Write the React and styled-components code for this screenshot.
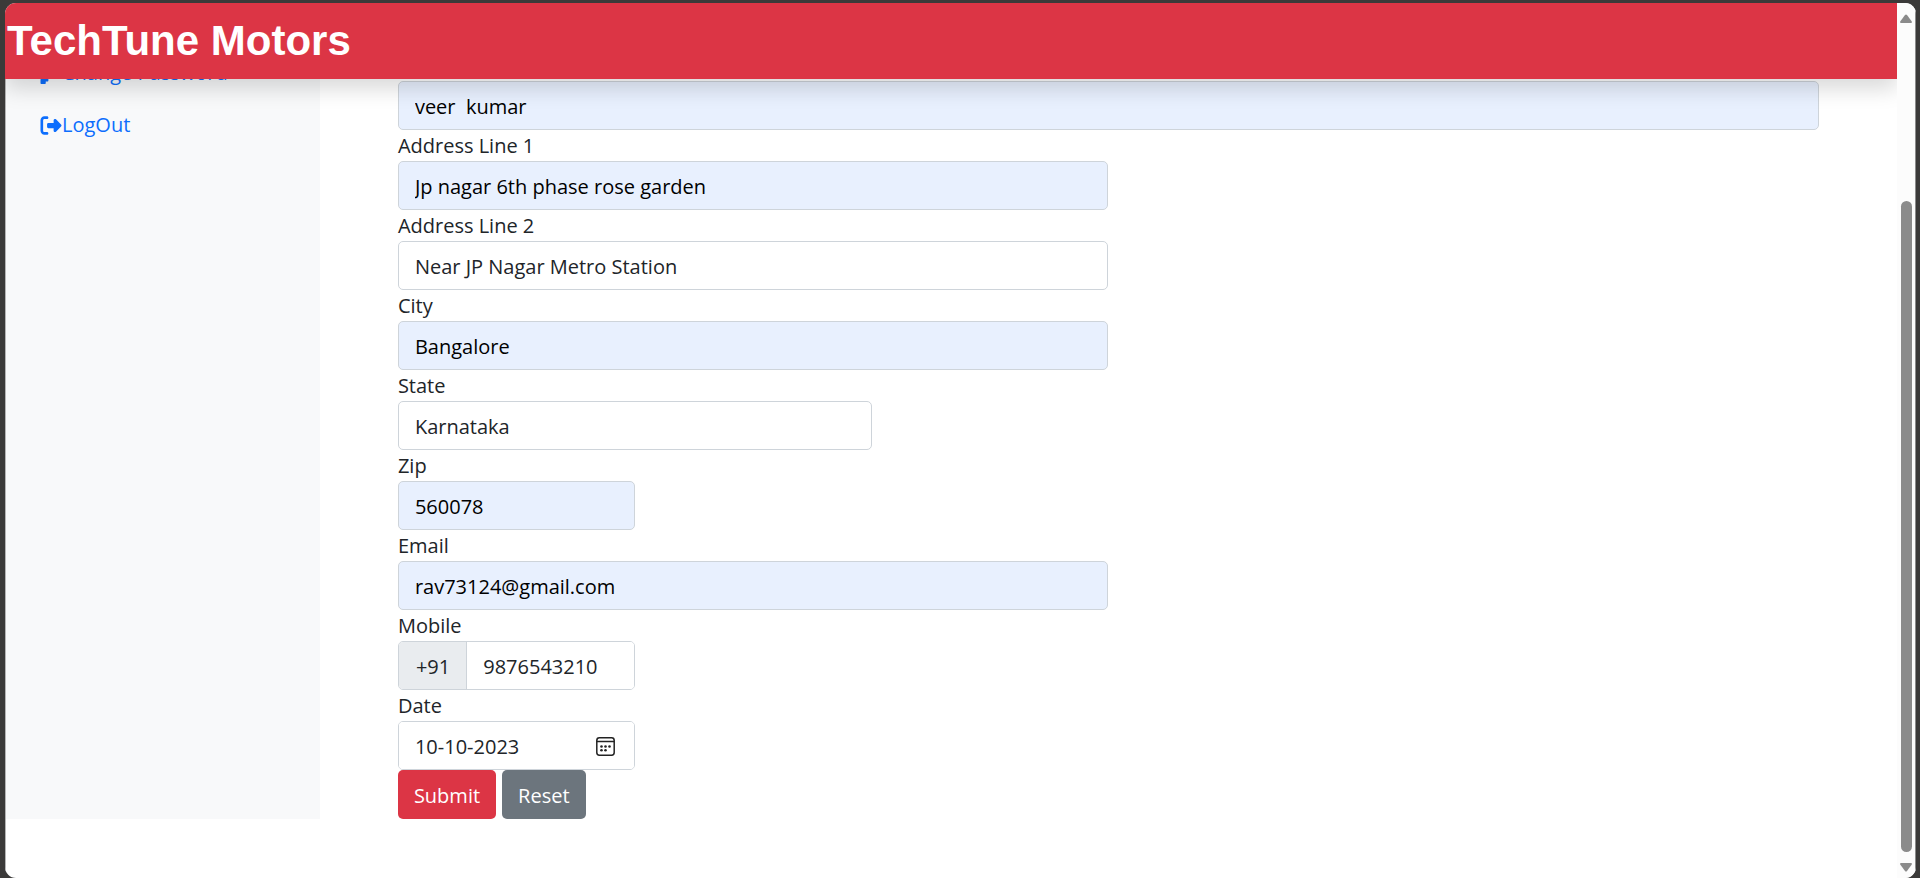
import React from "react";
import styled, { createGlobalStyle } from "styled-components";
import { FaKey, FaRightFromBracket } from "react-icons/fa6";

const GlobalStyle = createGlobalStyle`
  *, *::before, *::after { box-sizing: border-box; }
  body {
    margin: 0;
    background: #3b3a39;
    color: #212529;
    font-family: "Open Sans", "Noto Sans", sans-serif;
    font-size: 20px;
    line-height: 30px;
  }
  input, button { font: inherit; color: inherit; margin: 0; }
`;

const Desktop = styled.div`
  padding: 3px 4px 0 5px;
`;

const BrowserWindow = styled.div`
  display: flex;
  min-height: calc(100vh - 3px);
  border-radius: 11px;
  overflow: hidden;
  background: #fff;
`;

const Page = styled.div`
  flex: 1;
  min-width: 0;
  display: flex;
  flex-direction: column;
  overflow: hidden;
`;

const Header = styled.header`
  position: relative;
  z-index: 1;
  padding: 8px 0 8px 2px;
  background: #dc3545;
  box-shadow: 0 10px 20px rgba(0, 0, 0, 0.15);
`;

const Brand = styled.h1`
  margin: 0;
  color: #fff;
  font-family: "Liberation Sans", Arial, sans-serif;
  font-size: 42px;
  font-weight: 700;
  line-height: 60px;
`;

const Content = styled.div`
  flex: 1;
  border-left: 1px solid #b5b5b5;
`;

const Columns = styled.div`
  display: flex;
`;

const Sidebar = styled.nav`
  width: 16.6%;
  display: flex;
  flex-direction: column;
  gap: 20px;
  padding-left: 34px;
  background: #f8f9fa;
`;

const SideLink = styled.a`
  display: flex;
  align-items: center;
  color: #0d6efd;
  text-decoration: none;
  line-height: 32px;

  &:first-child { margin-top: -22px; }
  svg { width: 22px; height: 21px; }
`;

const Main = styled.main`
  flex: 1;
  padding: 2px 78px 0;
`;

const Field = styled.div`
  width: ${(p) => p.$width};
`;

const Label = styled.label`
  display: block;
  padding-top: 1px;
`;

const Input = styled.input`
  display: block;
  width: 100%;
  height: 49px;
  padding: 2px 16px 0;
  border: 1px solid #ced4da;
  border-radius: 5px;
  outline: none;
  background: ${(p) => (p.$filled ? "#e8f0fe" : "#fff")};
  color: ${(p) => (p.$filled ? "#000" : "#212529")};
`;

const InputGroup = styled.div`
  display: flex;
  height: 49px;
  border: 1px solid #ced4da;
  border-radius: 5px;
  overflow: hidden;
`;

const Prefix = styled.span`
  display: flex;
  align-items: center;
  padding: 2px 16px 0 17px;
  border-right: 1px solid #ced4da;
  background: #e9ecef;
`;

const BareInput = styled.input`
  flex: 1;
  min-width: 0;
  padding: 2px 16px 0;
  border: 0;
  outline: none;
  background: #fff;
`;

const PickerButton = styled.button`
  display: flex;
  align-items: center;
  padding: 2px 19px 0 0;
  border: 0;
  background: #fff;
`;

const Actions = styled.div`
  display: flex;
  gap: 6px;
`;

const Button = styled.button`
  height: 49px;
  padding: 2px 16px 0;
  border: 0;
  border-radius: 5px;
  background: ${(p) => (p.$danger ? "#dc3545" : "#6c757d")};
  color: #fff;
`;

const ScrollBar = styled.div`
  width: 19px;
  display: flex;
  flex-direction: column;
  align-items: center;
  padding: 11px 0 6px;
  border-right: 1px solid #8b8b8b;
  background: #fcfcfc;
`;

const ScrollTrack = styled.div`
  flex: 1;
  display: flex;
  flex-direction: column;
  padding: 0 0 11px;
`;

const ScrollGap = styled.div`
  flex: 178;
`;

const ScrollThumb = styled.div`
  flex: 651;
  width: 11px;
  border-radius: 6px;
  background: #8b8b8b;
`;

const CalendarIcon = () => (
  <svg width="19" height="19" viewBox="0 0 19 19" fill="none" stroke="#222" strokeWidth="1.5" aria-hidden="true">
    <rect x="0.8" y="0.8" width="17.4" height="17.4" rx="2.6" />
    <path d="M0.8 4.6H18.2" />
    <g fill="#222" stroke="none">
      <circle cx="5.5" cy="9.5" r="1.3" />
      <circle cx="9.5" cy="9.5" r="1.3" />
      <circle cx="13.5" cy="9.5" r="1.3" />
      <circle cx="5.5" cy="13.3" r="1.3" />
      <circle cx="9.5" cy="13.3" r="1.3" />
    </g>
  </svg>
);

const Arrow = ({ down }) => (
  <svg width="12" height="9" viewBox="0 0 12 9" fill="#8b8b8b" aria-hidden="true">
    <path d={down ? "M1 0H11Q12.5 .4 11.6 1.7L7 8Q6 9 5 8L.4 1.7Q-.5 .4 1 0Z" : "M1 9H11Q12.5 8.6 11.6 7.3L7 1Q6 0 5 1L.4 7.3Q-.5 8.6 1 9Z"} />
  </svg>
);

const ADDRESS_FIELDS = [
  { id: "address1", label: "Address Line 1", value: "Jp nagar 6th phase rose garden", width: "50%", filled: true },
  { id: "address2", label: "Address Line 2", value: "Near JP Nagar Metro Station", width: "50%" },
  { id: "city", label: "City", value: "Bangalore", width: "50%", filled: true },
  { id: "state", label: "State", value: "Karnataka", width: "33.3333%" },
  { id: "zip", label: "Zip", value: "560078", width: "16.6667%", filled: true },
  { id: "email", label: "Email", value: "rav73124@gmail.com", width: "50%", filled: true, type: "email" },
];

export default function App() {
  return (
    <Desktop>
      <GlobalStyle />
      <BrowserWindow>
        <Page>
          <Header>
            <Brand>TechTune Motors</Brand>
          </Header>
          <Content>
            <Columns>
              <Sidebar>
                <SideLink href="#password"><FaKey />Change Password</SideLink>
                <SideLink href="#logout"><FaRightFromBracket />LogOut</SideLink>
              </Sidebar>
              <Main>
                <form onSubmit={(e) => e.preventDefault()}>
                  <Field $width="100%">
                    <Input id="name" aria-label="Name" defaultValue="veer  kumar" $filled />
                  </Field>
                  {ADDRESS_FIELDS.map((f) => (
                    <Field key={f.id} $width={f.width}>
                      <Label htmlFor={f.id}>{f.label}</Label>
                      <Input id={f.id} type={f.type || "text"} defaultValue={f.value} $filled={f.filled} />
                    </Field>
                  ))}
                  <Field $width="16.6667%">
                    <Label htmlFor="mobile">Mobile</Label>
                    <InputGroup>
                      <Prefix>+91</Prefix>
                      <BareInput id="mobile" type="tel" defaultValue="9876543210" />
                    </InputGroup>
                  </Field>
                  <Field $width="16.6667%">
                    <Label htmlFor="date">Date</Label>
                    <InputGroup>
                      <BareInput id="date" defaultValue="10-10-2023" />
                      <PickerButton type="button" aria-label="Choose date"><CalendarIcon /></PickerButton>
                    </InputGroup>
                  </Field>
                  <Actions>
                    <Button type="submit" $danger>Submit</Button>
                    <Button type="reset">Reset</Button>
                  </Actions>
                </form>
              </Main>
            </Columns>
          </Content>
        </Page>
        <ScrollBar>
          <Arrow />
          <ScrollTrack>
            <ScrollGap />
            <ScrollThumb />
          </ScrollTrack>
          <Arrow down />
        </ScrollBar>
      </BrowserWindow>
    </Desktop>
  );
}
